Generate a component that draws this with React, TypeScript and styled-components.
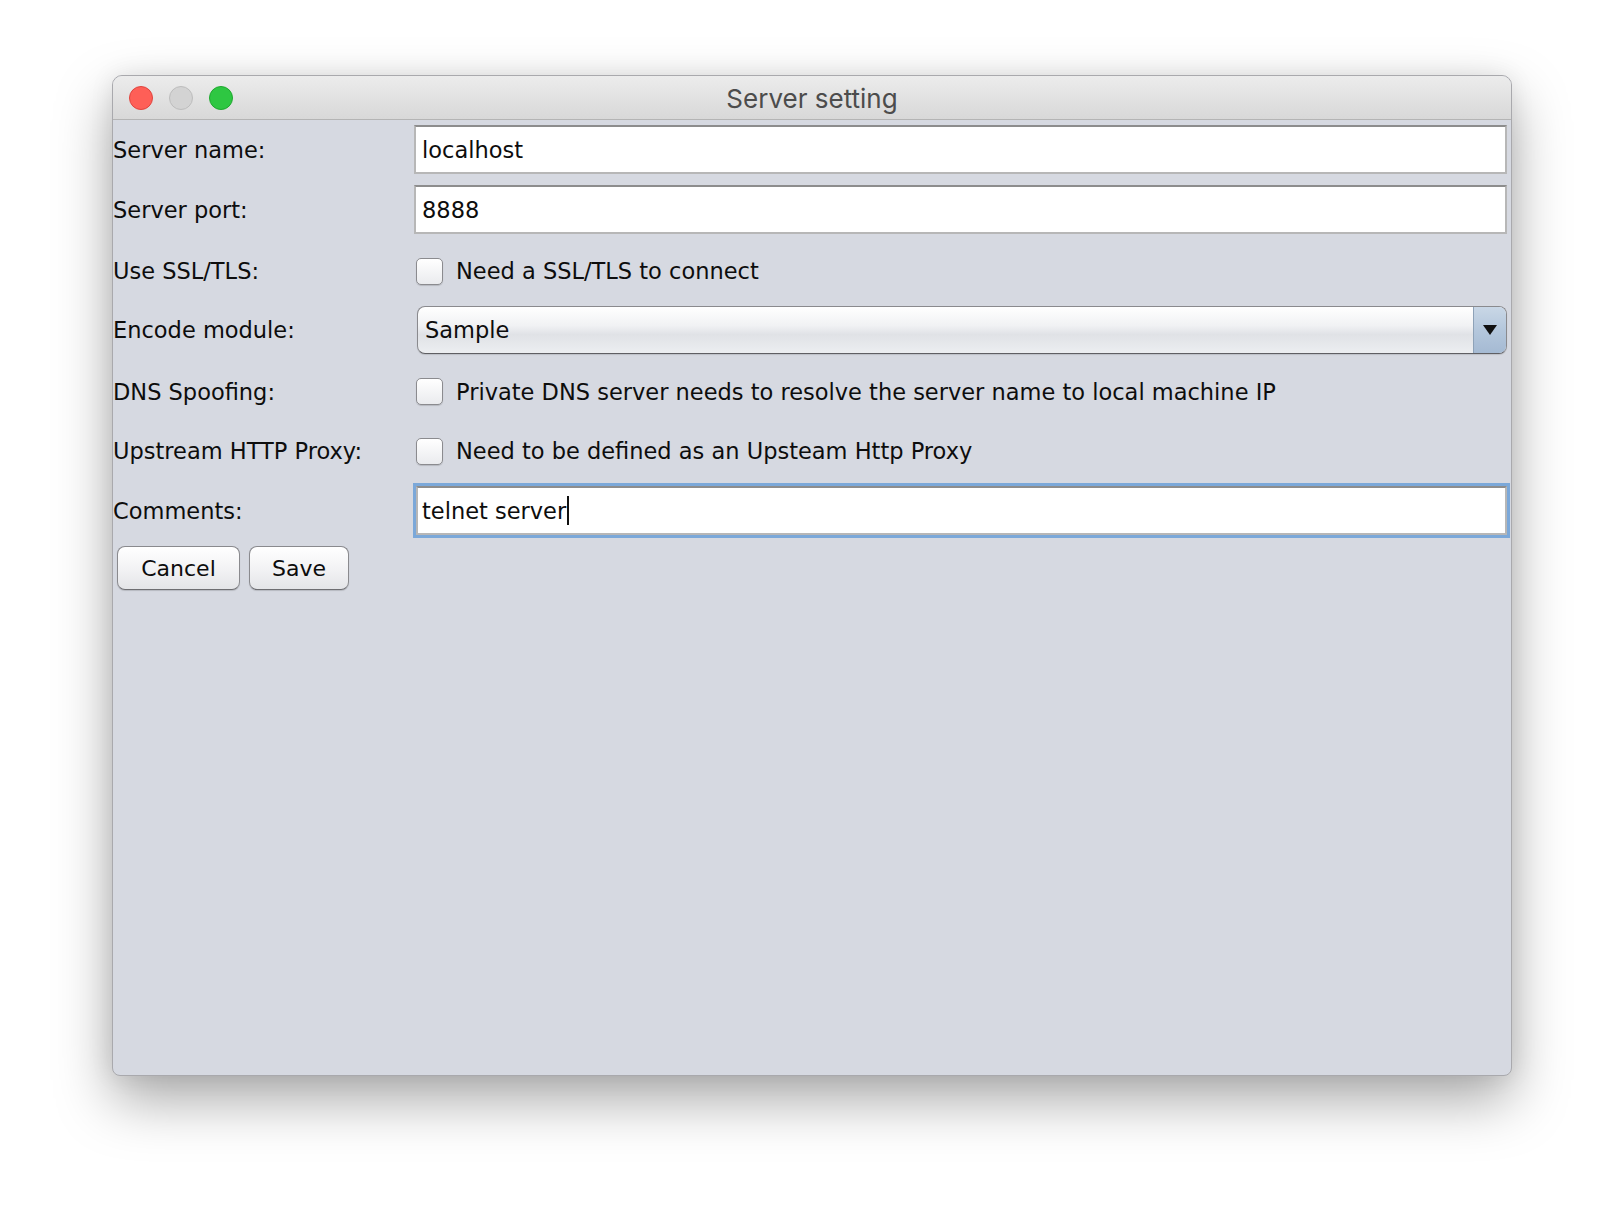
import styled, { createGlobalStyle } from "styled-components";

const GlobalStyle = createGlobalStyle`
  html, body {
    margin: 0;
    padding: 0;
    background: #ffffff;
  }
  body {
    font-family: "DejaVu Sans", "Liberation Sans", sans-serif;
  }
`;

const labelFont = `"DejaVu Sans", "Liberation Sans", sans-serif`;

const rows = [
  { label: "Server name:", kind: "field", value: "localhost", height: 59 },
  { label: "Server port:", kind: "field", value: "8888", height: 61 },
  { label: "Use SSL/TLS:", kind: "check", value: "Need a SSL/TLS to connect", height: 62 },
  { label: "Encode module:", kind: "combo", value: "Sample", height: 56 },
  { label: "DNS Spoofing:", kind: "check", value: "Private DNS server needs to resolve the server name to local machine IP", height: 67 },
  { label: "Upstream HTTP Proxy:", kind: "check", value: "Need to be defined as an Upsteam Http Proxy", height: 52 },
  { label: "Comments:", kind: "focused", value: "telnet server", height: 67 },
];

export default function App() {
  return (
    <Page>
      <GlobalStyle />
      <Window>
        <TitleBar>
          <Lights>
            <Light color="#fe5f57" border="#e0443e" />
            <Light color="#d3d3d3" border="#bdbdbd" />
            <Light color="#2ec742" border="#1fa82f" />
          </Lights>
          <Title>Server setting</Title>
        </TitleBar>
        <Body>
          {rows.map((row) => (
            <Row key={row.label} height={row.height}>
              <Label>{row.label}</Label>
              {row.kind === "field" && <TextField>{row.value}</TextField>}
              {row.kind === "focused" && (
                <TextField focused>
                  {row.value}
                  <Caret />
                </TextField>
              )}
              {row.kind === "check" && (
                <CheckRow>
                  <CheckBox />
                  <span>{row.value}</span>
                </CheckRow>
              )}
              {row.kind === "combo" && (
                <Combo>
                  <ComboText>{row.value}</ComboText>
                  <ComboArrow>
                    <svg width="14" height="10" viewBox="0 0 14 10">
                      <path d="M0 0 H14 L7 10 Z" fill="#111" />
                    </svg>
                  </ComboArrow>
                </Combo>
              )}
            </Row>
          ))}
          <ButtonBar>
            <Button>Cancel</Button>
            <Button>Save</Button>
          </ButtonBar>
        </Body>
      </Window>
    </Page>
  );
}

const Page = styled.div`
  width: 1624px;
  height: 1224px;
  box-sizing: border-box;
  padding: 75px 0 0 112px;
`;

const Window = styled.div`
  width: 1400px;
  height: 1001px;
  box-sizing: border-box;
  display: flex;
  flex-direction: column;
  border: 1px solid #a9a9ad;
  border-radius: 10px 10px 8px 8px;
  background: #d6d9e1;
  overflow: hidden;
  box-shadow: 0 24px 56px rgba(0, 0, 0, 0.34), 0 0 24px rgba(0, 0, 0, 0.08);
`;

const TitleBar = styled.div`
  position: relative;
  height: 43px;
  flex-shrink: 0;
  display: flex;
  align-items: center;
  justify-content: center;
  background: linear-gradient(#ececec, #d8d8d8);
  border-bottom: 1px solid #b4b4b4;
`;

const Lights = styled.div`
  position: absolute;
  left: 16px;
  top: 10px;
  display: flex;
  gap: 16px;
`;

const Light = styled.div<{ color: string; border: string }>`
  width: 24px;
  height: 24px;
  box-sizing: border-box;
  border-radius: 50%;
  background: ${(p) => p.color};
  border: 1px solid ${(p) => p.border};
`;

const Title = styled.div`
  font-family: "Inter", "Noto Sans", sans-serif;
  font-size: 26px;
  color: #4c4c4c;
  padding-top: 2px;
`;

const Body = styled.div`
  flex: 1;
  display: flex;
  flex-direction: column;
  padding: 0 4px 0 0;
`;

const Row = styled.div<{ height: number }>`
  height: ${(p) => p.height}px;
  display: grid;
  grid-template-columns: 301px 1fr;
  align-items: center;
`;

const Label = styled.div`
  font-family: ${labelFont};
  font-size: 22.5px;
  color: #0d0d0d;
`;

const TextField = styled.div<{ focused?: boolean }>`
  height: 49px;
  margin: ${(p) => (p.focused ? "0 0 0 2px" : "0")};
  box-sizing: border-box;
  display: flex;
  align-items: center;
  padding-left: ${(p) => (p.focused ? 4 : 6)}px;
  background: #fff;
  border: 2px solid #b7b7b7;
  border-top-color: #8d8d8d;
  font-family: ${labelFont};
  font-size: 22.5px;
  color: #0d0d0d;
  box-shadow: ${(p) => (p.focused ? "0 0 0 3px #7ba8d9" : "none")};
`;

const Caret = styled.span`
  display: inline-block;
  width: 2px;
  height: 29px;
  background: #111;
  margin-left: 1px;
`;

const CheckRow = styled.div`
  display: flex;
  align-items: center;
  gap: 13px;
  padding-left: 2px;
  font-family: ${labelFont};
  font-size: 22.5px;
  color: #0d0d0d;
`;

const CheckBox = styled.div`
  width: 27px;
  height: 27px;
  box-sizing: border-box;
  border-radius: 5px;
  border: 1px solid #8b8b8f;
  background: linear-gradient(#ffffff, #eaebee);
  box-shadow: 0 1px 1px rgba(0, 0, 0, 0.15);
`;

const Combo = styled.div`
  height: 48px;
  margin-left: 3px;
  box-sizing: border-box;
  display: flex;
  border: 1px solid #8a8a8e;
  border-bottom-color: #5f5f63;
  border-radius: 8px;
  overflow: hidden;
  background: linear-gradient(#ffffff 0%, #f1f2f4 40%, #e0e2e6 60%, #eceef1 100%);
  box-shadow: 0 1px 1px rgba(0, 0, 0, 0.12);
`;

const ComboText = styled.div`
  flex: 1;
  display: flex;
  align-items: center;
  padding-left: 7px;
  font-family: ${labelFont};
  font-size: 22.5px;
  color: #0d0d0d;
`;

const ComboArrow = styled.div`
  width: 32px;
  display: flex;
  align-items: center;
  justify-content: center;
  border-left: 1px solid #8ea2b8;
  background: linear-gradient(#c9d7e6 0%, #b4c7dc 50%, #a5bad3 100%);
`;

const ButtonBar = styled.div`
  display: flex;
  gap: 9px;
  padding: 2px 0 0 4px;
`;

const Button = styled.button`
  height: 44px;
  padding: 0;
  box-sizing: border-box;
  border: 1px solid #8a8a8e;
  border-bottom-color: #6e6e72;
  border-radius: 8px;
  background: linear-gradient(#ffffff 0%, #f3f3f5 50%, #e4e5e8 100%);
  box-shadow: 0 1px 1px rgba(0, 0, 0, 0.15);
  font-family: ${labelFont};
  font-size: 22px;
  color: #0d0d0d;
  &:first-child {
    width: 123px;
  }
  &:last-child {
    width: 100px;
  }
`;
